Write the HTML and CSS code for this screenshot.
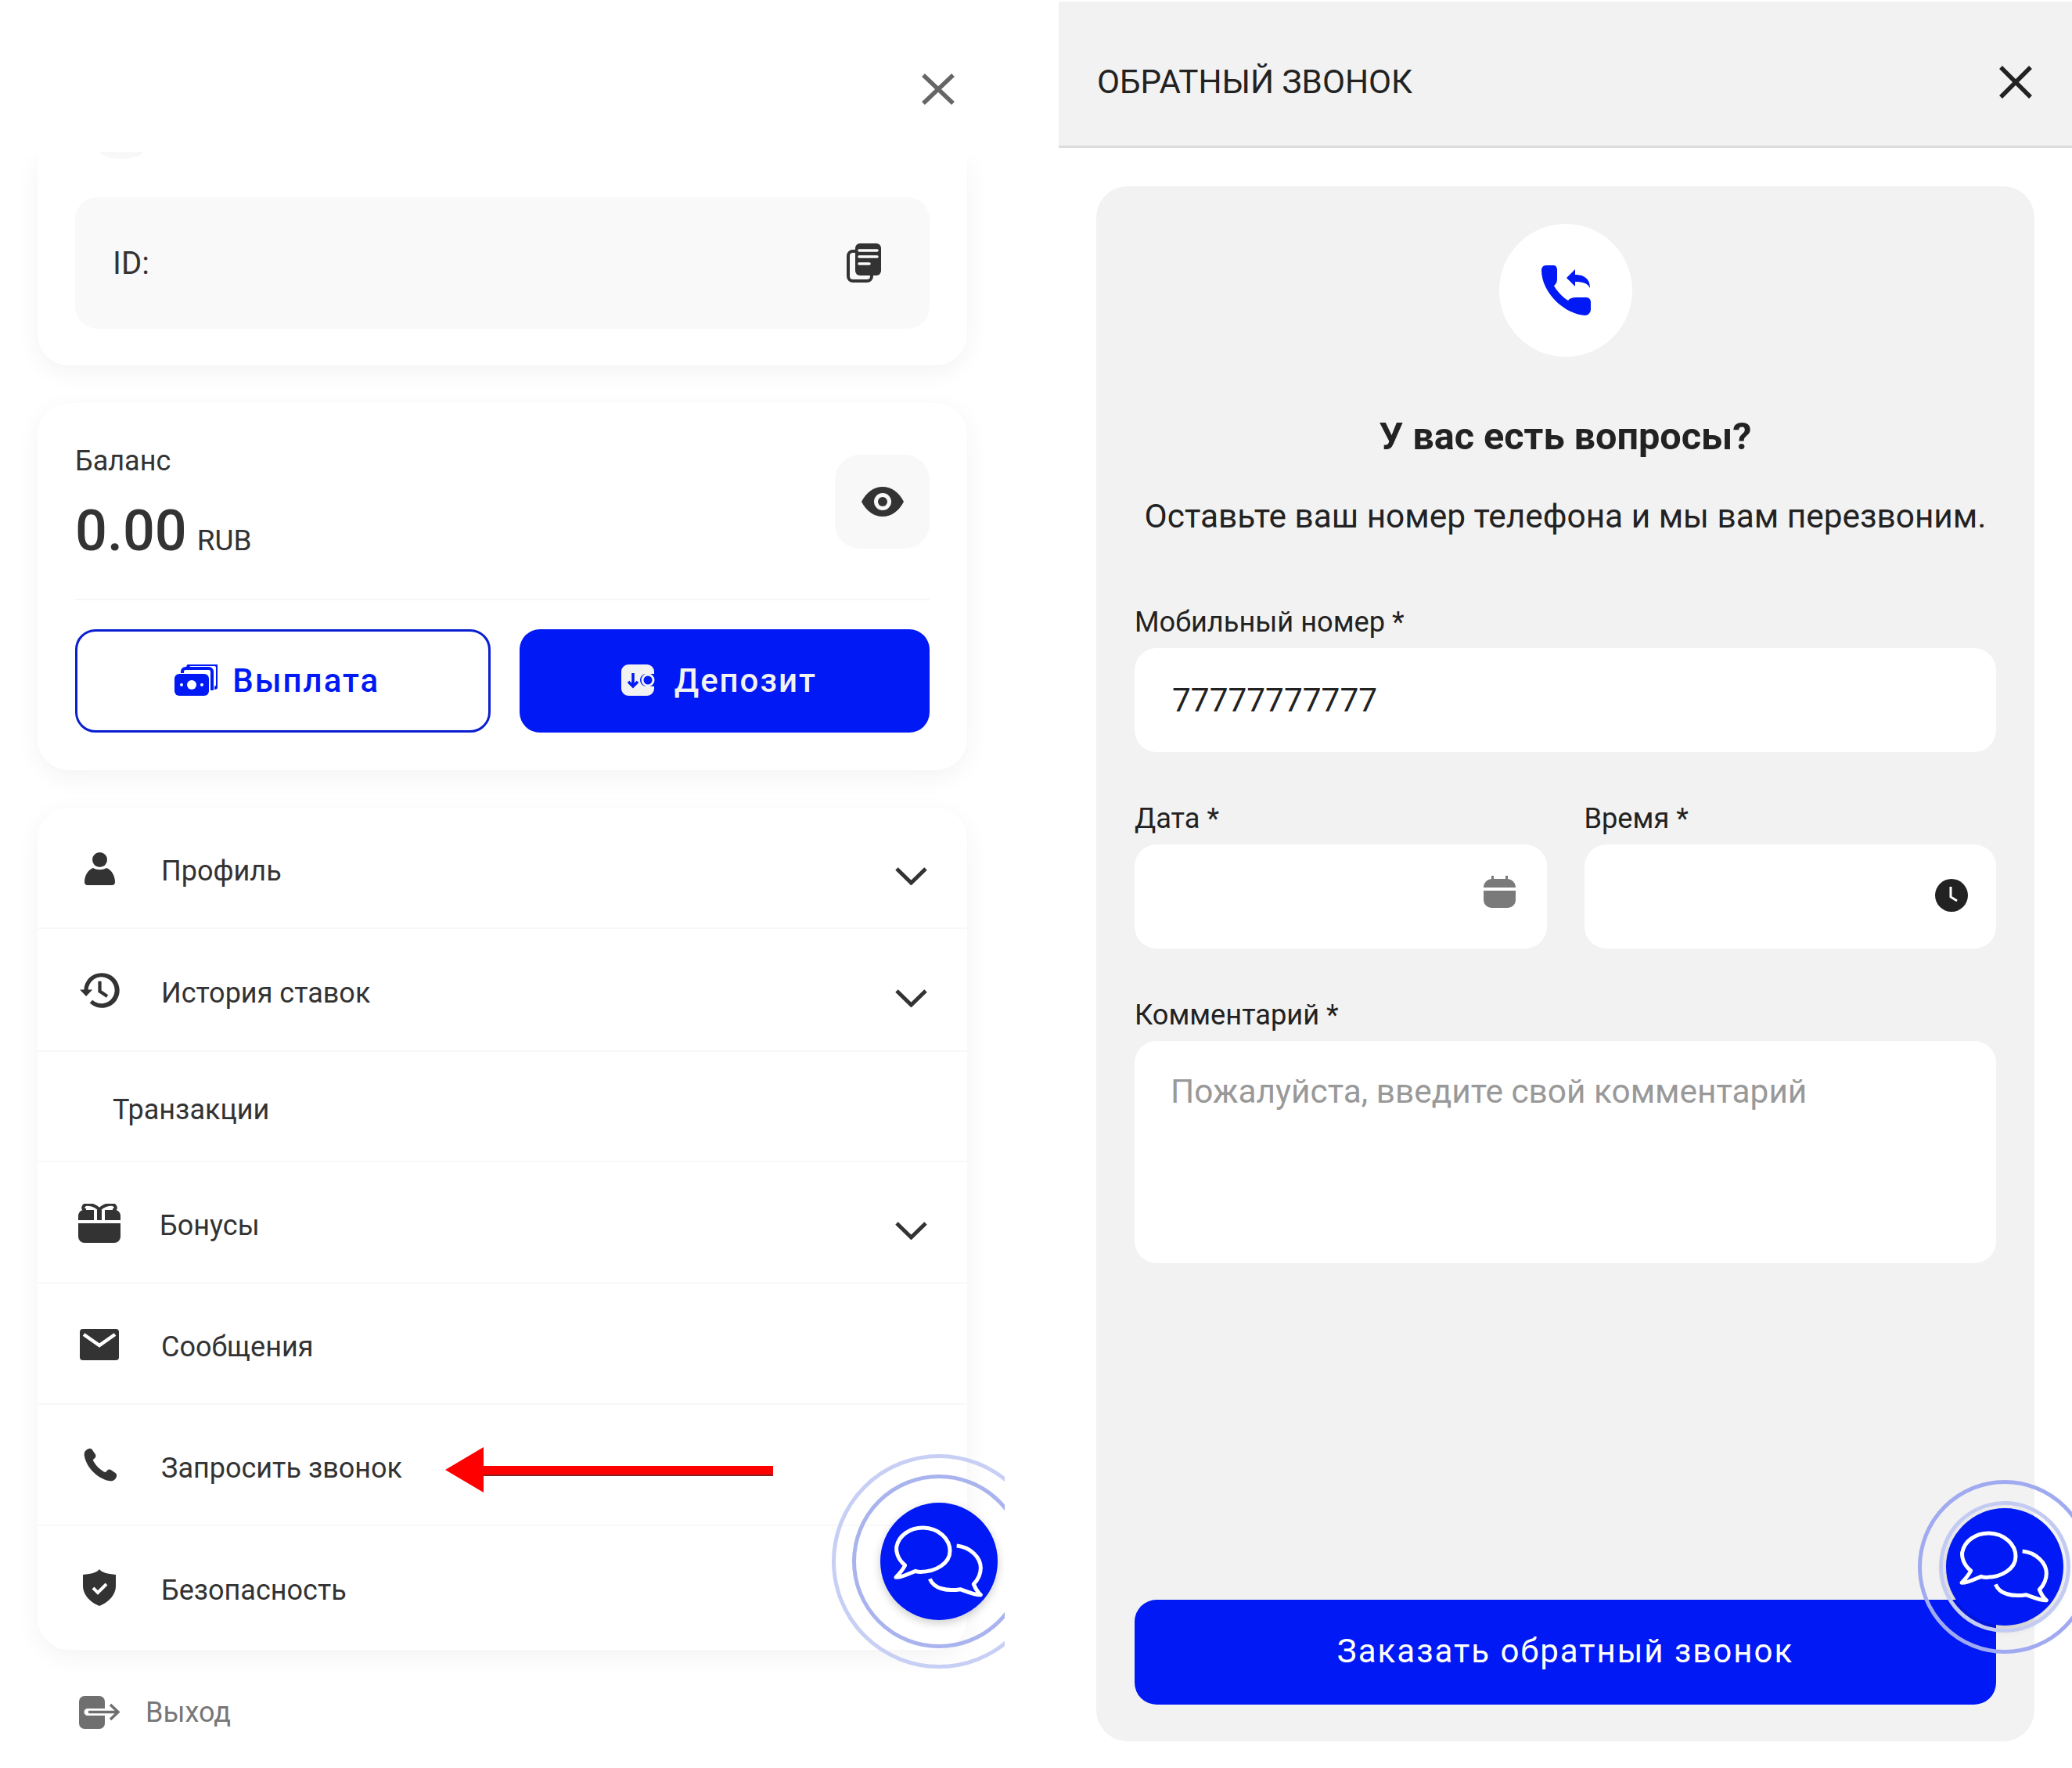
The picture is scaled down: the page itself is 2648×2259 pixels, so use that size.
FILE: index.html
```html
<!DOCTYPE html>
<html lang="en">
<head>
    <meta charset="UTF-8">
    <title>Обратный звонок</title>
    <link rel="stylesheet" href="styles.css">
</head>
<body>
    <div class="page">
        <section class="account">
            <div class="account-top">
                <svg class="close-grey" viewBox="0 0 44 42"><path d="M3 3 41 39M41 3 3 39"/></svg>
            </div>
            <div class="avatar-edge"></div>

            <div class="card card-id">
                <div class="id-box">
                    <span>ID:</span>
                    <svg class="copy-icon" viewBox="0 0 44 50">
                        <rect x="2" y="10" width="30" height="38" rx="6" fill="none" stroke="#333" stroke-width="4"/>
                        <rect x="11" y="0" width="33" height="41" rx="6" fill="#333"/>
                        <path d="M16 9h23M16 17h23M16 26h13" stroke="#fafafa" stroke-width="3.5" stroke-linecap="round"/>
                    </svg>
                </div>
            </div>

            <div class="card card-balance">
                <div class="balance-top">
                    <div class="balance-info">
                        <div class="balance-label">Баланс</div>
                        <div class="balance-sum">0.00<span>RUB</span></div>
                    </div>
                    <div class="eye-box">
                        <svg viewBox="0 0 56 40" width="56" height="40">
                            <path d="M1 20C7 8 17 1 28 1s21 7 27 19c-6 12-16 19-27 19S7 32 1 20z" fill="#333"/>
                            <circle cx="28" cy="20" r="11" fill="#f8f8f8"/>
                            <circle cx="28" cy="20" r="6" fill="#333"/>
                        </svg>
                    </div>
                </div>
                <div class="balance-btns">
                    <button class="btn btn-outline">
                        <svg viewBox="0 0 55 40" width="55" height="40">
                            <path d="M17 5V4a4 4 0 0 1 4-4h30a4 4 0 0 1 4 4v22a4 4 0 0 1-4 4M10 11V9a4 4 0 0 1 4-4h30a4 4 0 0 1 4 4v24" fill="none" stroke="#0019f5" stroke-width="4"/>
                            <rect x="0" y="12" width="44" height="28" rx="6" fill="#0019f5"/>
                            <circle cx="22" cy="26" r="6" fill="#fff"/>
                            <circle cx="9" cy="26" r="2" fill="#fff"/>
                            <circle cx="35" cy="26" r="2" fill="#fff"/>
                        </svg>
                        Выплата
                    </button>
                    <button class="btn btn-solid">
                        <svg viewBox="0 0 44 40" width="44" height="40">
                            <path d="M9 0h24a9 9 0 0 1 9 9v3H32a8 8 0 0 0 0 16h10v3a9 9 0 0 1-9 9H9a9 9 0 0 1-9-9V9a9 9 0 0 1 9-9z" fill="#f2f2f2"/>
                            <circle cx="34" cy="20" r="7" fill="none" stroke="#f2f2f2" stroke-width="3"/>
                            <path d="M15 11v17M9 22l6 6 6-6" fill="none" stroke="#0019f5" stroke-width="3.5"/>
                        </svg>
                        Депозит
                    </button>
                </div>
            </div>

            <div class="card card-menu">
                <div class="menu-row">
                    <span class="menu-icon">
                        <svg viewBox="0 0 39 42" width="39" height="42">
                            <circle cx="19.5" cy="9.5" r="9.5" fill="#333"/>
                            <path d="M11 20c5 3 12 3 17 0 6 2 11 9 11 18 0 2-1 4-4 4H4c-3 0-4-2-4-4 0-9 5-16 11-18z" fill="#333"/>
                        </svg>
                    </span>
                    <span class="menu-label">Профиль</span>
                    <svg class="chevron" viewBox="0 0 43 24"><path d="M3 3l18.500 18L40 3"/></svg>
                </div>
                <div class="menu-row menu-row-tall">
                    <span class="menu-icon">
                        <svg viewBox="0 0 24 21" width="51" height="45">
                            <path d="M13 0a10.500 10.500 0 0 0-10.500 10H0l3.800 4L7.600 10H5a8 8 0 1 1 2.600 6.300L6 18a10.500 10.500 0 1 0 7-18z" fill="#333"/>
                            <path d="M12 5v6l4.500 3" fill="none" stroke="#333" stroke-width="2"/>
                        </svg>
                    </span>
                    <span class="menu-label">История ставок</span>
                    <svg class="chevron" viewBox="0 0 43 24"><path d="M3 3l18.500 18L40 3"/></svg>
                </div>
                <div class="menu-row menu-row-sub">
                    <span class="menu-label">Транзакции</span>
                </div>
                <div class="menu-row">
                    <span class="menu-icon">
                        <svg viewBox="0 0 54 50" width="54" height="50">
                            <path d="M0 21v-5c0-4 2-7 6-8h42c4 1 6 4 6 8v5z" fill="#333"/>
                            <path d="M0 25h54v17a8 8 0 0 1-8 8H8a8 8 0 0 1-8-8z" fill="#333"/>
                            <path d="M22 8v13M32 8v13" stroke="#fff" stroke-width="4"/>
                            <path d="M27 8C22 1 10-1 7 3c-2 3 0 5 3 5M27 8c5-7 17-9 20-5 2 3 0 5-3 5" fill="none" stroke="#333" stroke-width="4"/>
                        </svg>
                    </span>
                    <span class="menu-label menu-label-tight">Бонусы</span>
                    <svg class="chevron" viewBox="0 0 43 24"><path d="M3 3l18.500 18L40 3"/></svg>
                </div>
                <div class="menu-row">
                    <span class="menu-icon">
                        <svg viewBox="0 0 50 40" width="50" height="40">
                            <rect width="50" height="40" rx="4" fill="#333"/>
                            <path d="M5 7l20 14L45 7" fill="none" stroke="#fff" stroke-width="4.500"/>
                        </svg>
                    </span>
                    <span class="menu-label">Сообщения</span>
                </div>
                <div class="menu-row">
                    <span class="menu-icon">
                        <svg viewBox="0 0 24 24" width="47" height="47">
                            <path d="M5 1C2.500 1.700 1.500 3.500 2 6c1.500 7.500 8.500 14.500 16 16 2.500.5 4.300-.6 5-3 .2-1-.2-1.800-1-2.300l-2.800-1.900c-.9-.5-1.600-.3-2.300.4l-1.200 1.300C12.500 15.200 8.800 11.500 7.500 8.300l1.300-1.200c.7-.7.8-1.500.4-2.300L7.300 2C6.800 1.200 6 .8 5 1z" fill="#333"/>
                        </svg>
                    </span>
                    <span class="menu-label">Запросить звонок</span>
                </div>
                <div class="menu-row">
                    <span class="menu-icon">
                        <svg viewBox="0 0 42 47" width="42" height="47">
                            <path d="M21 0c3 4 10 6 21 7v14c0 12-9 21-21 26C9 42 0 33 0 21V7c11-1 18-3 21-7z" fill="#333"/>
                            <path d="M13 24l6 6 11-11" fill="none" stroke="#fff" stroke-width="4"/>
                        </svg>
                    </span>
                    <span class="menu-label">Безопасность</span>
                </div>
            </div>

            <div class="logout">
                <svg viewBox="0 0 53 42" width="53" height="42">
                    <path d="M8 0h19a7 7 0 0 1 7 7v28a7 7 0 0 1-7 7H8a7 7 0 0 1-7-7V7a7 7 0 0 1 7-7z" fill="#6f6f6f"/>
                    <path d="M12 16h29v9H12a4.500 4.500 0 0 1 0-9z" fill="#fff"/>
                    <path d="M13 20.500h36M41 11l10 9.500L41 30" fill="none" stroke="#6f6f6f" stroke-width="3.500"/>
                </svg>
                <span>Выход</span>
            </div>

            <svg class="red-arrow" viewBox="0 0 419 58" width="419" height="58">
                <path d="M0 29 49 0v24h370v11H49v23z" fill="#f00"/>
                <path d="M49 35h370v2H49z" fill="#8a2020"/>
            </svg>

            <div class="chat-fab chat-fab-left">
                <i class="ring ring-a"></i>
                <i class="ring ring-b"></i>
                <svg viewBox="375 360 450 450" width="150" height="150">
                    <path d="M470 600c-30-25-35-55-33-70 8-45 53-75 103-74 60 1 102 44 102 89s-52 83-122 80l-10-3c-20 8-55 26-75 24 10-11 25-26 35-46z" fill="none" stroke="#fff" stroke-width="15" stroke-linejoin="round"/>
                    <path d="M668 525c52 5 92 45 92 85 0 30-15 50-27 62 7 18 17 33 27 41-20 2-55-13-78-21-52 8-102-2-117-40" fill="none" stroke="#fff" stroke-width="15" stroke-linejoin="round"/>
                </svg>
            </div>
        </section>

        <section class="callback">
            <header class="callback-head">
                <span>ОБРАТНЫЙ ЗВОНОК</span>
                <svg class="close-dark" viewBox="0 0 44 44"><path d="M3 3l38 38M41 3 3 41"/></svg>
            </header>

            <form class="callback-card">
                <div class="call-circle">
                    <svg viewBox="0 0 64 64" width="64" height="64">
                        <path d="M1 6c0-3 2-6 6-6h9c3 0 5 2 5 6v11c0 4-1 7-4 9 3 6 11 15 18 19 2-3 6-4 10-4h13c4 0 6 3 6 6v9c0 4-3 8-7 8C32 63 1 36 1 6z" fill="#0019f5"/>
                        <path d="M33 16 44 5v7c10 0 19 4 19 17-3-6-9-8-19-8v6z" fill="#0019f5"/>
                    </svg>
                </div>
                <h2>У вас есть вопросы?</h2>
                <p>Оставьте ваш номер телефона и мы вам перезвоним.</p>

                <label class="field-label label-first">Мобильный номер *</label>
                <input class="field" type="text" value="77777777777">

                <div class="two-cols">
                    <div class="col">
                        <label class="field-label">Дата *</label>
                        <div class="field-wrap">
                            <input class="field" type="text">
                            <svg class="calendar-icon" viewBox="0 0 41 41" width="41" height="41">
                                <path d="M10 0h3v4h15V0h3v4c6 1 10 5 10 11H0C0 9 4 5 10 4z" fill="#7a7a7a"/>
                                <path d="M0 19h41v12a10 10 0 0 1-10 10H10A10 10 0 0 1 0 31z" fill="#7a7a7a"/>
                            </svg>
                        </div>
                    </div>
                    <div class="col">
                        <label class="field-label">Время *</label>
                        <div class="field-wrap">
                            <input class="field" type="text">
                            <svg class="clock-icon" viewBox="0 0 42 42" width="42" height="42">
                                <circle cx="21" cy="21" r="21" fill="#222"/>
                                <path d="M20 10v13l8 5" fill="none" stroke="#fff" stroke-width="3"/>
                            </svg>
                        </div>
                    </div>
                </div>

                <label class="field-label">Комментарий *</label>
                <textarea class="field field-area" placeholder="Пожалуйста, введите свой комментарий"></textarea>

                <button class="submit-btn" type="button">Заказать обратный звонок</button>
            </form>

            <div class="chat-fab chat-fab-right">
                <i class="ring ring-c"></i>
                <i class="ring ring-d"></i>
                <svg viewBox="375 360 450 450" width="150" height="150">
                    <path d="M470 600c-30-25-35-55-33-70 8-45 53-75 103-74 60 1 102 44 102 89s-52 83-122 80l-10-3c-20 8-55 26-75 24 10-11 25-26 35-46z" fill="none" stroke="#fff" stroke-width="15" stroke-linejoin="round"/>
                    <path d="M668 525c52 5 92 45 92 85 0 30-15 50-27 62 7 18 17 33 27 41-20 2-55-13-78-21-52 8-102-2-117-40" fill="none" stroke="#fff" stroke-width="15" stroke-linejoin="round"/>
                </svg>
            </div>
        </section>
    </div>
</body>
</html>
```

FILE: styles.css
```css
* {
    box-sizing: border-box;
}

body {
    margin: 0;
    padding: 0;
    background: #fff;
    font-family: Roboto, "Noto Sans", sans-serif;
    color: #333;
}

.page {
    display: flex;
    gap: 69px;
    width: 2648px;
    height: 2259px;
    overflow: hidden;
}

/* left screen */
.account {
    position: relative;
    flex: none;
    width: 1284px;
    height: 2259px;
    overflow: hidden;
}

.account-top {
    position: relative;
    z-index: 2;
    display: flex;
    justify-content: flex-end;
    align-items: flex-start;
    height: 198px;
    padding: 93px 63px 0 0;
    background: #fff;
}

.close-grey {
    width: 44px;
    height: 42px;
    fill: none;
    stroke: #666;
    stroke-width: 5.500;
}

.avatar-edge {
    position: absolute;
    z-index: 3;
    left: 128px;
    top: 194px;
    width: 54px;
    height: 9px;
    border-radius: 0 0 27px 27px / 0 0 9px 9px;
    background: #f8f8f8;
}

.card {
    margin: 0 48px 48px 48px;
    padding: 0 48px;
    background: #fff;
    border-radius: 40px;
    box-shadow: 0 8px 32px rgba(0, 0, 0, 0.05);
}

.card-id {
    height: 269px;
    padding-top: 54px;
    border-radius: 0 0 40px 40px;
}

.id-box {
    display: flex;
    justify-content: space-between;
    align-items: center;
    height: 168px;
    padding: 0 62px 0 48px;
    background: #f9f9f9;
    border-radius: 28px;
    font-size: 40px;
}

.copy-icon {
    width: 44px;
    height: 50px;
}

.card-balance {
    height: 469px;
}

.balance-top {
    display: flex;
    justify-content: space-between;
    align-items: center;
    height: 252px;
    border-bottom: 2px solid #f6f6f6;
}

.balance-info {
    padding-top: 23px;
}

.balance-label {
    font-size: 36px;
    line-height: 44px;
}

.balance-sum {
    margin-top: 23px;
    font-size: 72px;
    font-weight: 500;
    line-height: 90px;
}

.balance-sum span {
    margin-left: 13px;
    font-size: 37px;
    font-weight: 400;
}

.eye-box {
    display: flex;
    justify-content: center;
    align-items: center;
    width: 121px;
    height: 120px;
    margin-top: 2px;
    background: #f8f8f8;
    border-radius: 32px;
}

.balance-btns {
    display: flex;
    gap: 37px;
    margin-top: 37px;
}

.btn {
    display: flex;
    flex: 1;
    justify-content: center;
    align-items: center;
    height: 132px;
    padding: 0 14px 2px 0;
    border-radius: 26px;
    font-family: inherit;
    font-size: 42px;
    font-weight: 500;
    letter-spacing: 2px;
}

.btn-outline {
    gap: 19px;
    color: #0019f5;
    background: #fff;
    border: 3px solid #0a1fd0;
}

.btn-solid {
    gap: 24px;
    color: #f2f2f2;
    background: #0019f5;
    border: none;
}

.card-menu {
    height: 1076px;
    margin-bottom: 0;
    padding: 0;
}

.menu-row {
    display: flex;
    align-items: center;
    height: 155px;
    padding: 2px 50px 0 48px;
    border-bottom: 2px solid #f8f8f8;
    font-size: 36px;
}

.menu-row:last-child {
    border-bottom: none;
}

.menu-row-tall {
    height: 157px;
}

.menu-row-sub {
    height: 141px;
    padding-left: 96px;
}

.menu-icon {
    display: flex;
    flex: none;
    justify-content: center;
    align-items: center;
    width: 62px;
    margin-right: 48px;
}

.menu-label {
    padding-top: 6px;
}

.menu-label-tight {
    margin-left: -2px;
}

.chevron {
    width: 43px;
    height: 24px;
    margin: 18px 0 0 auto;
    fill: none;
    stroke: #333;
    stroke-width: 5;
}

.logout {
    display: flex;
    align-items: center;
    gap: 33px;
    height: 42px;
    margin: 59px 0 0 100px;
    color: #777;
    font-size: 36px;
}

.red-arrow {
    position: absolute;
    left: 569px;
    top: 1849px;
}

/* chat button used on both screens */
.chat-fab {
    position: absolute;
    z-index: 5;
    display: flex;
    justify-content: center;
    align-items: center;
    width: 150px;
    height: 150px;
    background: #0019f5;
    border-radius: 50%;
    box-shadow: 0 4px 12px rgba(0, 0, 0, 0.2);
}

.chat-fab-left {
    left: 1125px;
    top: 1920px;
}

.chat-fab-right {
    left: 1134px;
    top: 1927px;
}

.ring {
    position: absolute;
    border-radius: 50%;
    border-style: solid;
    border-width: 5px;
}

.ring-a {
    inset: -36px;
    border-color: #a9b3ee;
}

.ring-b {
    inset: -62px;
    border-color: #c8cff5;
}

.ring-c {
    inset: -36px;
    border-color: #a0aaf0;
}

.ring-d {
    inset: -9px;
    border-color: #c4cbf2;
}

/* right screen */
.callback {
    position: relative;
    flex: none;
    width: 1295px;
    height: 2259px;
}

.callback-head {
    display: flex;
    justify-content: space-between;
    align-items: center;
    height: 187px;
    margin-top: 2px;
    padding: 21px 50px 0 49px;
    background: #f2f2f2;
    border-bottom: 3px solid #dcdcdc;
    color: #222;
    font-size: 42.2px;
}

.close-dark {
    width: 44px;
    height: 44px;
    fill: none;
    stroke: #222;
    stroke-width: 5.500;
}

.callback-card {
    display: flex;
    flex-direction: column;
    width: 1199px;
    height: 1987px;
    margin: 49px 0 0 48px;
    padding: 48px 49px 47px 49px;
    background: #f2f2f2;
    border-radius: 40px;
    color: #222;
}

.call-circle {
    display: flex;
    flex: none;
    justify-content: center;
    align-items: center;
    width: 170px;
    height: 170px;
    margin: 0 auto;
    background: #fff;
    border-radius: 50%;
}

.callback-card h2 {
    margin: 72px 0 0;
    font-size: 48.6px;
    font-weight: 700;
    line-height: 60px;
    text-align: center;
}

.callback-card p {
    margin: 42px 0 0;
    font-size: 42.4px;
    line-height: 60px;
    text-align: center;
}

.field-label {
    display: block;
    height: 44px;
    margin: 62px 0 12px;
    font-size: 36.2px;
    line-height: 46px;
}

.label-first {
    margin-top: 82px;
}

.field {
    display: block;
    width: 100%;
    height: 133px;
    padding: 0 48px;
    background: #fff;
    border: none;
    border-radius: 28px;
    color: #222;
    font-family: inherit;
    font-size: 42.4px;
}

.field-area {
    flex: none;
    height: 284px;
    padding: 40px 46px;
    resize: none;
}

.field-area::placeholder {
    color: #999;
    opacity: 1;
}

.two-cols {
    display: flex;
    gap: 48px;
}

.col {
    flex: 1;
}

.field-wrap {
    position: relative;
}

.calendar-icon {
    position: absolute;
    right: 40px;
    top: 40px;
}

.clock-icon {
    position: absolute;
    right: 36px;
    top: 44px;
}

.submit-btn {
    flex: none;
    height: 134px;
    margin-top: auto;
    padding-bottom: 4px;
    background: #0019f5;
    border: none;
    border-radius: 28px;
    color: #fff;
    font-family: inherit;
    font-size: 42px;
    letter-spacing: 2px;
}
```
